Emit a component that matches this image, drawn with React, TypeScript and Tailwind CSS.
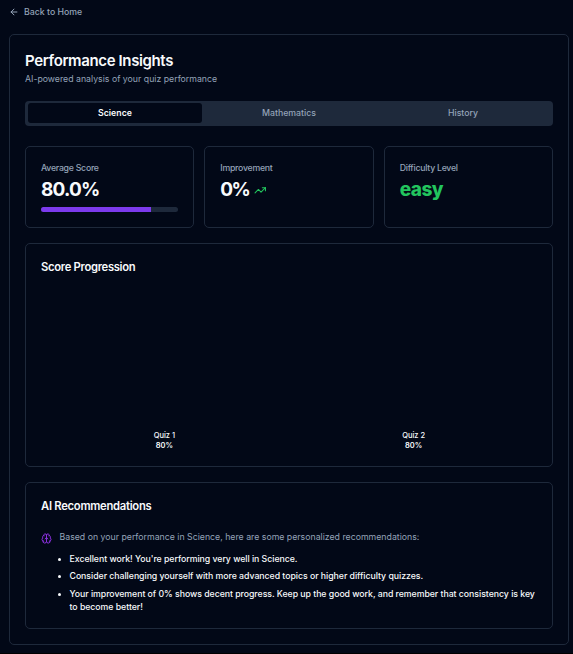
import { ArrowLeft, Brain, TrendingUp } from "lucide-react";
import type { ReactNode } from "react";

const subjects = ["Science", "Mathematics", "History"];

const quizzes = [
  { name: "Quiz 1", score: 80 },
  { name: "Quiz 2", score: 80 },
];

const recommendations = [
  "Excellent work! You're performing very well in Science.",
  "Consider challenging yourself with more advanced topics or higher difficulty quizzes.",
  "Your improvement of 0% shows decent progress. Keep up the good work, and remember that consistency is key to become better!",
];

function Stat({ label, children }: { label: string; children: ReactNode }) {
  return (
    <div className="h-[82px] rounded-[5px] border border-[#1e293b] px-[15px] pt-[15px]">
      <p className="text-[8.75px] leading-[13px] font-medium tracking-[-0.03em] text-[#94a3b8]">{label}</p>
      {children}
    </div>
  );
}

export default function App() {
  return (
    <div className="h-[654px] border-b border-black bg-[#020817] pt-[5px] pr-1 pl-[9px] font-['Inter',sans-serif] text-[8.75px] leading-[12.5px] text-[#f8fafc]">
      <a className="flex h-[14px] w-fit items-center gap-[5px] font-medium text-[#94a3b8]">
        <ArrowLeft size={10} strokeWidth={2.4} />
        Back to Home
      </a>
      <main className="mt-[15px] h-[611px] rounded-[5px] border border-[#1e293b] px-[15px] pt-[18px]">
        <h1 className="text-[15px] leading-[16px] font-semibold tracking-[-0.025em]">Performance Insights</h1>
        <p className="mt-[4px] h-[13px] text-[#94a3b8]">AI-powered analysis of your quiz performance</p>

        <div className="mt-[15px] grid h-[25px] grid-cols-3 rounded-[4px] bg-[#1e293b] p-[3px] pt-[2px]">
          {subjects.map((subject, i) => (
            <button
              key={subject}
              className={
                i === 0
                  ? "flex items-center justify-center rounded-[3px] bg-[#020817] font-semibold text-[#f8fafc]"
                  : "flex items-center justify-center font-medium text-[#94a3b8]"
              }
            >
              {subject}
            </button>
          ))}
        </div>

        <div className="mt-5 grid grid-cols-3 gap-[10px]">
          <Stat label="Average Score">
            <p className="mt-[3px] text-[19px] leading-6 font-bold tracking-[-0.8px]">80.0%</p>
            <div className="mt-[5px] h-[5px] overflow-hidden rounded-full bg-[#1e293b]">
              <div className="h-full w-4/5 bg-[#7c3aed]" />
            </div>
          </Stat>
          <Stat label="Improvement">
            <div className="mt-[3px] flex items-center gap-[5px]">
              <p className="text-[19px] leading-6 font-bold tracking-[-1.6px]">0%</p>
              <TrendingUp size={12.5} className="mt-px text-[#22c55e]" />
            </div>
          </Stat>
          <Stat label="Difficulty Level">
            <p className="mt-[3px] text-[19px] leading-6 font-extrabold tracking-[-0.5px] text-[#22c55e]">easy</p>
          </Stat>
        </div>

        <section className="mt-[15px] flex h-[224px] flex-col rounded-[5px] border border-[#1e293b] px-[15px] pt-[15px]">
          <h2 className="text-[11.25px] leading-4 font-semibold tracking-[-0.028em]">Score Progression</h2>
          <div className="mt-auto mb-[15px] grid grid-cols-2 gap-[2.5px]">
            {quizzes.map((quiz) => (
              <div key={quiz.name} className="text-center text-[7.5px] leading-[10px]">
                <p className="font-medium">{quiz.name}</p>
                <p className="font-semibold">{quiz.score}%</p>
              </div>
            ))}
          </div>
        </section>

        <section className="mt-[15px] h-[147px] rounded-[5px] border border-[#1e293b] px-[15px] pt-[15px]">
          <h2 className="text-[11.25px] leading-4 font-semibold tracking-[-0.025em]">AI Recommendations</h2>
          <div className="mt-4 flex items-start gap-[7.5px]">
            <Brain size={11} className="mt-[3px] shrink-0 text-[#9333ea]" />
            <div className="pt-px">
              <p className="text-[#94a3b8]">Based on your performance in Science, here are some personalized recommendations:</p>
              <ul className="mt-[9px] list-disc space-y-[5px] pl-[10px] leading-[12.7px] font-medium tracking-[-0.04px]">
                {recommendations.map((text) => (
                  <li key={text}>{text}</li>
                ))}
              </ul>
            </div>
          </div>
        </section>
      </main>
    </div>
  );
}
